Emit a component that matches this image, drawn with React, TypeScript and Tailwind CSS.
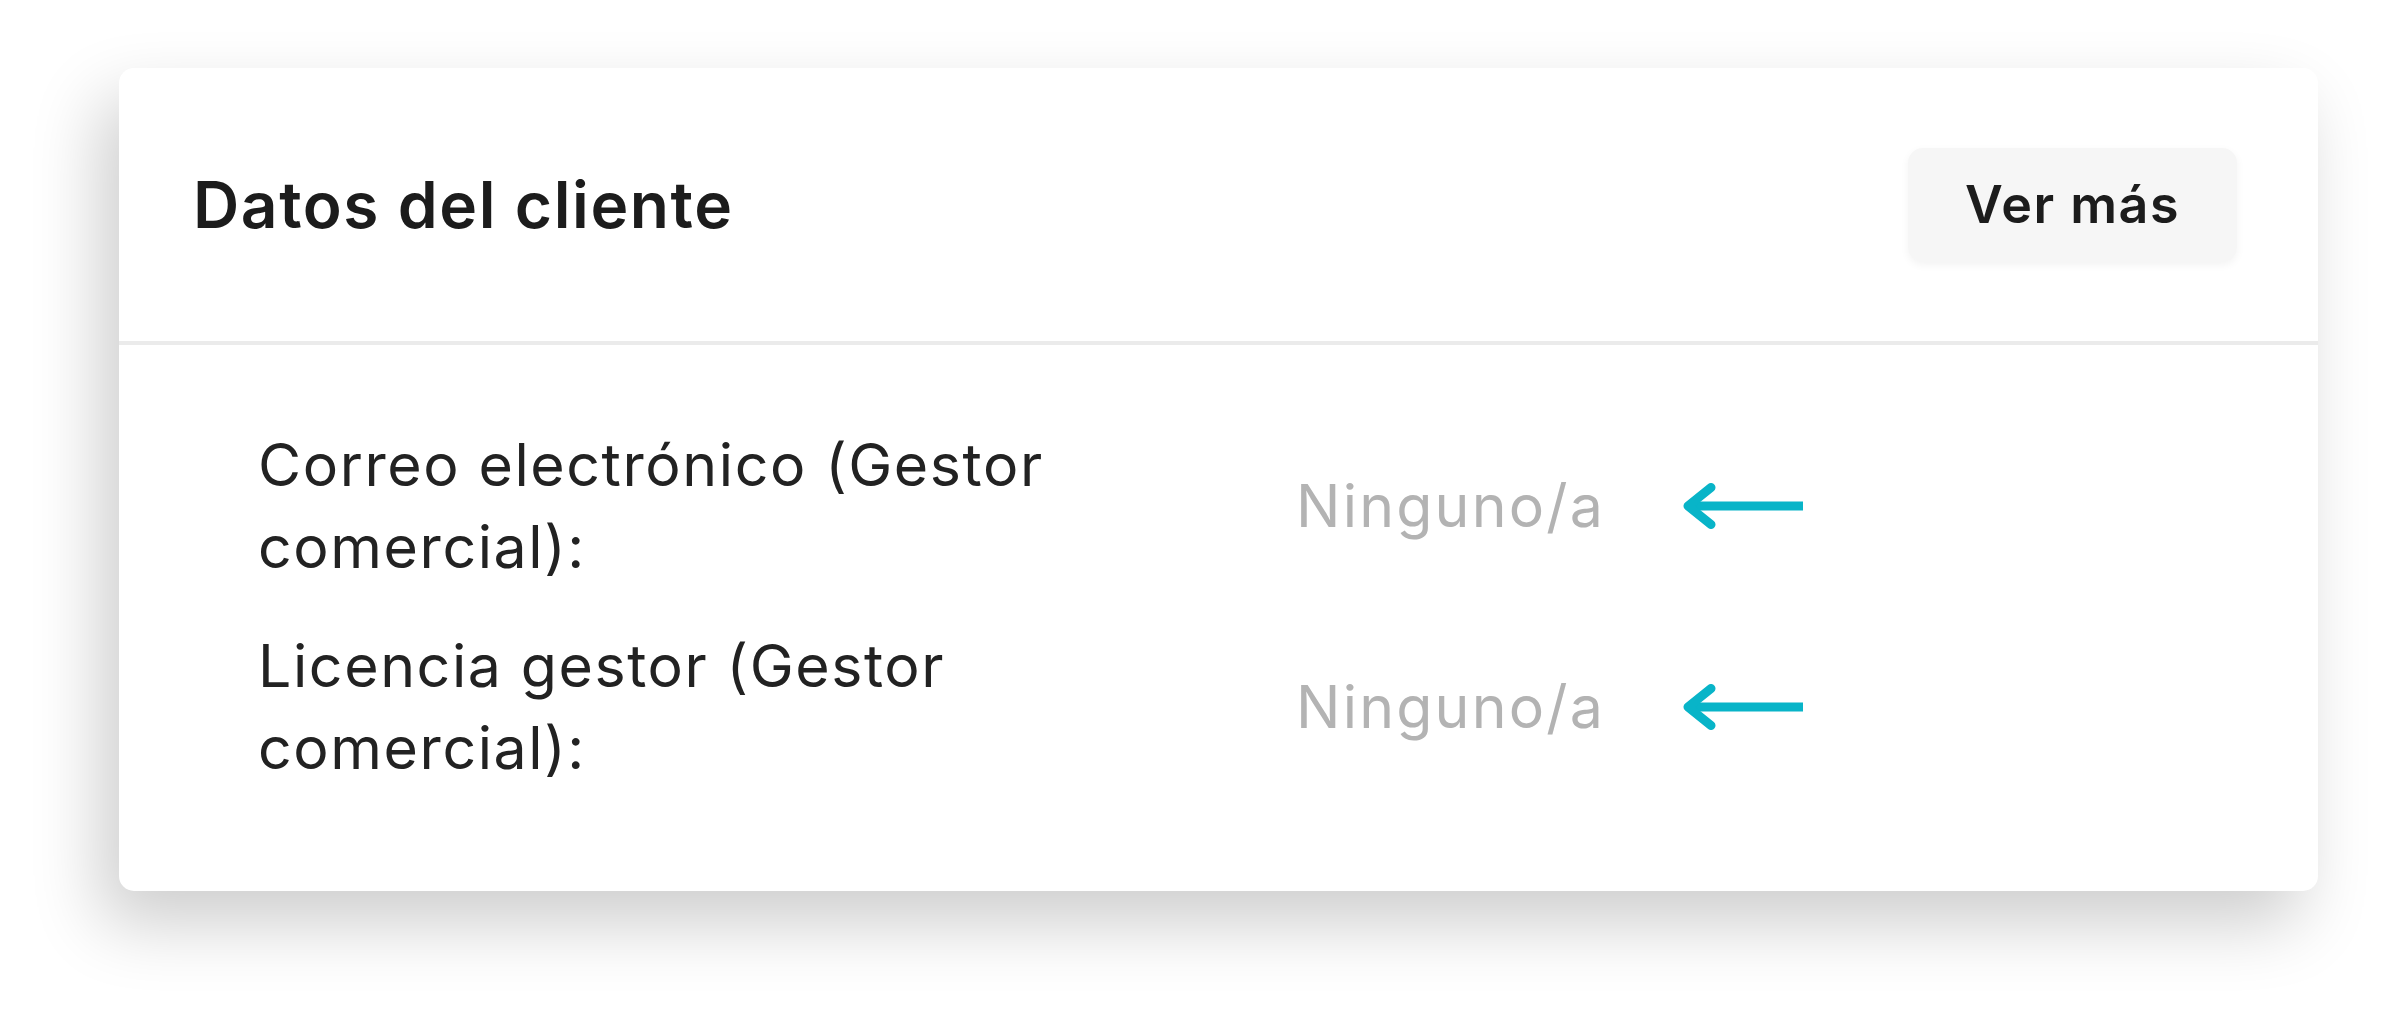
const rows = [
  { label: ['Correo electrónico (Gestor', 'comercial):'], value: 'Ninguno/a' },
  { label: ['Licencia gestor (Gestor', 'comercial):'], value: 'Ninguno/a' },
];

const BackArrow = () => {
  return (
    <svg width="120" height="46" viewBox="0 0 120 46" fill="none" className="shrink-0">
      <path d="M4 23H120" stroke="#08b4c8" strokeWidth="9" />
      <path
        d="M28 4.5L5 23L28 41.5"
        stroke="#08b4c8"
        strokeWidth="9"
        strokeLinecap="round"
        strokeLinejoin="round"
      />
    </svg>
  );
};

export default function App() {
  return (
    <div className="min-h-[1012px] w-[2387px] bg-white pl-[119px] pt-[68px] font-['Inter','Noto_Sans',sans-serif]">
      <div className="w-[2199px] rounded-[15px] bg-white shadow-[-18px_32px_70px_rgba(0,0,0,0.2)]">
        <div className="flex h-[277px] items-center justify-between border-b-[4px] border-[#ebebeb] pl-[74px] pr-[81px]">
          <h2 className="text-[64px] font-semibold tracking-[1.6px] text-[#1c1c1c]">Datos del cliente</h2>
          <button className="flex h-[114px] w-[329px] items-center justify-center rounded-[15px] bg-[#f6f6f6] text-[52px] font-semibold tracking-[1.5px] text-[#1c1c1c] shadow-[0_3px_8px_rgba(0,0,0,0.05)]">
            Ver más
          </button>
        </div>

        <div className="flex flex-col gap-[37px] pb-[102px] pl-[139px] pt-[79px]">
          {rows.map((row, i) => (
            <div key={i} className="grid grid-cols-[1038px_auto] items-center">
              <div className="text-[59px] leading-[82px] tracking-[1.6px] text-[#222222]">
                {row.label.map((line) => (
                  <div key={line} className="whitespace-nowrap">
                    {line}
                  </div>
                ))}
              </div>
              <div className="flex items-center gap-[78px]">
                <span className="text-[59px] leading-[82px] tracking-[2.2px] text-[#b3b3b3]">{row.value}</span>
                <BackArrow />
              </div>
            </div>
          ))}
        </div>
      </div>
    </div>
  );
}
